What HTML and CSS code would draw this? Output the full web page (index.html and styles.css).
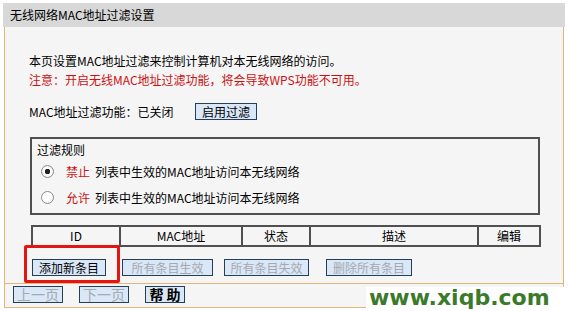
FILE: index.html
```html
<!DOCTYPE html>
<html lang="zh-CN">
  <head>
    <meta charset="UTF-8" />
    <title>无线网络MAC地址过滤设置</title>
    <link rel="stylesheet" href="styles.css">
  </head>
  <body>
    <div class="page">
      <div class="title">无线网络MAC地址过滤设置</div>
      <div class="panel">
        <div class="main">
          <p class="intro">
            本页设置MAC地址过滤来控制计算机对本无线网络的访问。<br />
            <span class="warn">注意：开启无线MAC地址过滤功能，将会导致WPS功能不可用。</span>
          </p>

          <div class="status-row">
            <span class="status">MAC地址过滤功能：已关闭</span>
            <button class="btn btn-enable">启用过滤</button>
          </div>

          <div class="rules">
            <div class="rules-title">过滤规则</div>
            <label class="rule">
              <input type="radio" name="rule" value="deny" checked />
              <span class="rule-key">禁止</span>
              <span class="rule-text">列表中生效的MAC地址访问本无线网络</span>
            </label>
            <label class="rule">
              <input type="radio" name="rule" value="allow" />
              <span class="rule-key">允许</span>
              <span class="rule-text">列表中生效的MAC地址访问本无线网络</span>
            </label>
          </div>

          <table class="mac-table">
            <colgroup>
              <col class="c-id" />
              <col class="c-mac" />
              <col class="c-state" />
              <col class="c-desc" />
              <col class="c-edit" />
            </colgroup>
            <tr>
              <th>ID</th>
              <th>MAC地址</th>
              <th>状态</th>
              <th>描述</th>
              <th>编辑</th>
            </tr>
          </table>

          <div class="actions">
            <button class="btn btn-add">添加新条目</button>
            <button class="btn btn-all-on" disabled>所有条目生效</button>
            <button class="btn btn-all-off" disabled>所有条目失效</button>
            <button class="btn btn-del" disabled>删除所有条目</button>
          </div>
        </div>

        <div class="footer">
          <button class="btn btn-page" disabled>上一页</button>
          <button class="btn btn-page" disabled>下一页</button>
          <button class="btn btn-help">帮 助</button>
        </div>
      </div>

      <!-- highlight around the add button -->
      <div class="highlight"></div>
    </div>

    <div class="watermark">www.xiqb.com</div>
  </body>
</html>
```

FILE: styles.css
```css
* {
  box-sizing: border-box;
}
body {
  margin: 0;
  background: #fff;
  font-family: "Noto Sans CJK SC", "DejaVu Sans", sans-serif;
  font-size: 12px;
  color: #000;
  width: 568px;
  height: 311px;
  overflow: hidden;
  position: relative;
}
.page {
  position: relative;
  margin: 3px 0 0 3px;
  width: 562px;
}
.title {
  height: 24px;
  line-height: 24px;
  padding-left: 7px;
  background: #d8d8d8;
}
.panel {
  margin: 0 1px;
  border-left: 1px solid #e3b676;
  border-right: 1px solid #e3b676;
  background: #f5f5f5;
}
.main {
  height: 257px;
  padding: 24px 0 0 24px;
  border-bottom: 1px solid #e3b676;
}
.intro {
  margin: 0;
  line-height: 19px;
}
.warn {
  color: #cc1111;
}
.status-row {
  display: flex;
  align-items: center;
  height: 17px;
  margin-top: 14px;
}
.status {
  width: 166px;
}
.btn {
  height: 17px;
  padding: 0;
  font-family: inherit;
  font-size: 12px;
  line-height: 15px;
  color: #000;
  background: #d9e7f7;
  border: 1px solid #253f58;
  border-radius: 0;
}
.btn:disabled {
  color: #a4a9b0;
}
.btn-enable {
  width: 62px;
}
.rules {
  margin-top: 17px;
  margin-left: 1px;
  width: 510px;
  height: 78px;
  padding: 3px 0 0 5px;
  border: 2px solid #505050;
}
.rules-title {
  line-height: 16px;
}
.rule {
  display: flex;
  align-items: center;
  height: 26px;
}
.rule input {
  appearance: none;
  flex: none;
  width: 13px;
  height: 13px;
  margin: 0 12px 0 4px;
  border: 1px solid #8c8c8c;
  border-radius: 50%;
  background: radial-gradient(circle at 40% 35%, #fff 40%, #e6e6e6 100%);
}
.rule input:checked {
  background: radial-gradient(circle, #222 0 2.5px, #fff 3px 45%, #e6e6e6 100%);
}
.rule-key {
  color: #cc1111;
  margin-right: 5px;
}
.mac-table {
  margin-top: 10px;
  margin-left: 2px;
  width: 508px;
  border-collapse: collapse;
  table-layout: fixed;
}
.mac-table th {
  height: 20px;
  padding: 0;
  font-weight: normal;
  line-height: 16px;
  text-align: center;
  border: 2px solid #505050;
}
.c-id {
  width: 88px;
}
.c-mac {
  width: 122px;
}
.c-state {
  width: 68px;
}
.c-desc {
  width: 168px;
}
.c-edit {
  width: 62px;
}
.actions {
  display: flex;
  margin-top: 12px;
  margin-left: 3px;
}
.btn-add {
  width: 74px;
}
.btn-all-on {
  width: 91px;
  margin-left: 16px;
}
.btn-all-off {
  width: 85px;
  margin-left: 11px;
}
.btn-del {
  width: 86px;
  margin-left: 17px;
}
.footer {
  display: flex;
  gap: 16px;
  height: 24px;
  padding: 2px 0 0 8px;
  border-bottom: 1px solid #e3b676;
}
.btn-page {
  width: 50px;
  font-size: 14px;
}
.btn-help {
  width: 40px;
  font-size: 14px;
  font-weight: bold;
}
.highlight {
  position: absolute;
  left: 21px;
  top: 242px;
  width: 96px;
  height: 38px;
  border: 3px solid #e51515;
  border-radius: 2px;
}
.watermark {
  position: absolute;
  left: 366px;
  top: 287px;
  width: 202px;
  height: 24px;
  padding-left: 3px;
  background: #fff;
  font-family: "DejaVu Sans", sans-serif;
  font-size: 22px;
  font-weight: bold;
  line-height: 22px;
  color: #3b7a2a;
}
```
